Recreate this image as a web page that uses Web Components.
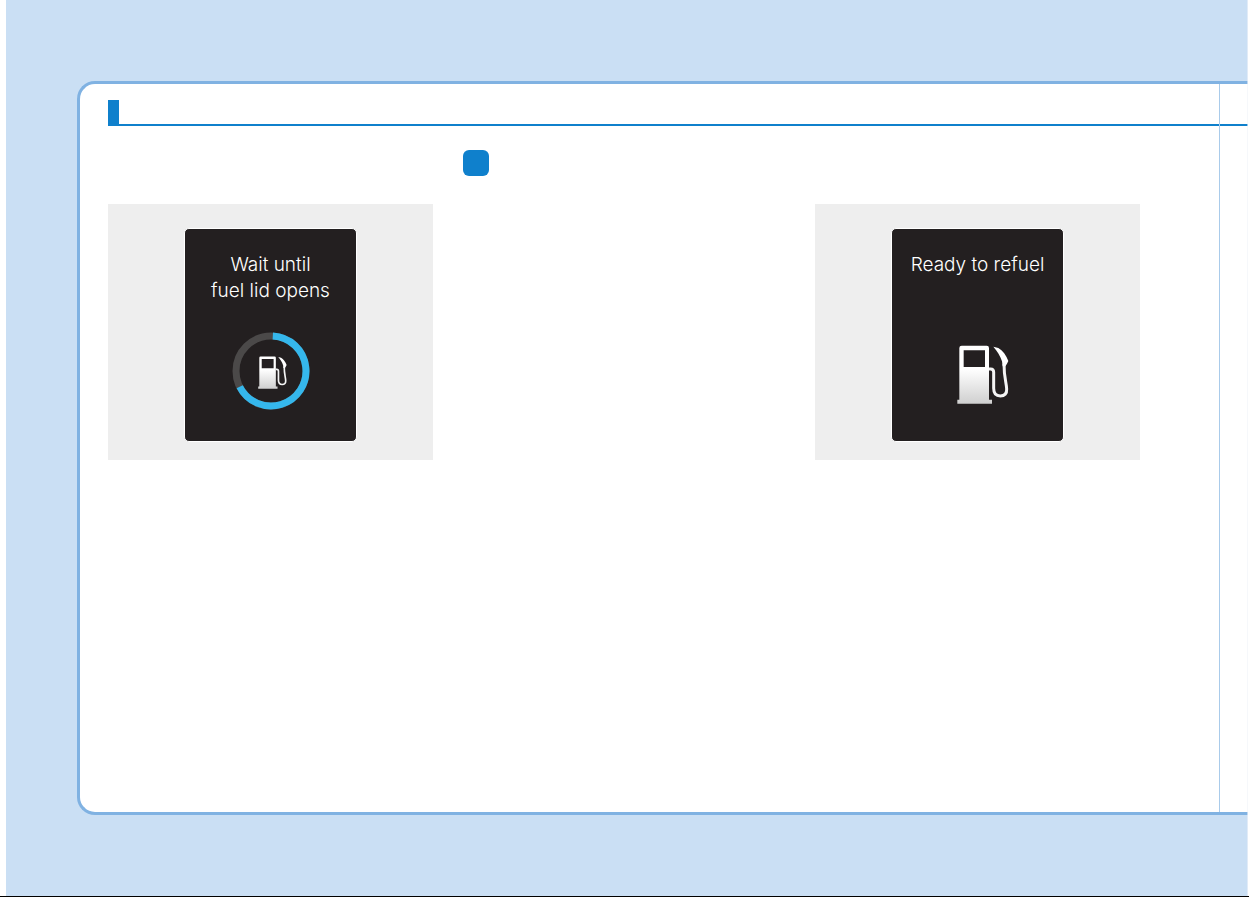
<!DOCTYPE html>
<html lang="en">
<head>
<meta charset="utf-8">
<title>Opening the fuel lid</title>
<style>
  html { background: #fff; }
  body { box-sizing: border-box; display: flex; min-height: 100vh; margin: 0; border-bottom: 1px solid #000;
    font-family: Inter, Roboto, "Liberation Sans", sans-serif; }
</style>
</head>
<body>
<manual-page>
  <section-rule></section-rule>
  <column-grid>
    <manual-figure>
      <cluster-screen>Wait until<br>fuel lid opens
        <progress-ring slot="icon"><fuel-pump size="small"></fuel-pump></progress-ring>
      </cluster-screen>
    </manual-figure>
    <step-badge></step-badge>
    <manual-figure>
      <cluster-screen>Ready to refuel
        <fuel-pump slot="icon"></fuel-pump>
      </cluster-screen>
    </manual-figure>
  </column-grid>
</manual-page>

<script>
const define = (name, html) => customElements.define(name, class extends HTMLElement {
  constructor() {
    super();
    this.attachShadow({ mode: 'open' }).innerHTML = html;
  }
});

define('manual-page', `
  <style>
    :host { flex: 1; display: flex; box-sizing: border-box; margin: 0 1px 0 6px;
      padding: 81px 0; position: relative; background: #cadff4; }
    :host::after { content: ""; position: absolute; top: 0; right: 0; bottom: 0; width: 1px; background: rgba(240,244,249,.6); }
    .frame { flex: 1; display: flex; margin-left: 71px; background: #fff; border: 3px solid #80b2e2;
      border-right: 0; border-radius: 18px 0 0 18px; }
    main { flex: 1; min-width: 0; padding: 16px 0 16px 28px; }
    aside { width: 28px; padding-top: 16px; border-left: 1px solid #a9cbea; }
    .next { height: 24px; border-bottom: 2px solid #0f80cc; }
  </style>
  <div class="frame">
    <main><slot></slot></main>
    <aside><div class="next"></div></aside>
  </div>`);

define('section-rule', `
  <style>
    :host { display: block; border-bottom: 2px solid #0f80cc; }
    .tab { width: 11px; height: 24px; background: #0f80cc; }
  </style>
  <div class="tab"></div>`);

define('column-grid', `
  <style>
    :host { display: grid; grid-template-columns: 325fr 322fr 325fr; gap: 30px; padding: 24px 79px 0 0; align-items: start; }
  </style>
  <slot></slot>`);

define('manual-figure', `
  <style>
    :host { display: block; }
    figure { box-sizing: border-box; margin: 54px 0 0; height: 256px; padding-top: 24px; display: flex;
      justify-content: center; align-items: flex-start; background: #eee; }
  </style>
  <figure><slot></slot></figure>`);

define('step-badge', `
  <style>
    :host { display: block; width: 26px; height: 26px; border-radius: 6px; background: #0f80cc; }
  </style>`);

define('cluster-screen', `
  <style>
    :host { display: flex; flex-direction: column; box-sizing: border-box; width: 173px; height: 214px;
      padding: 23px 0 31px; border: 1px solid #fff; border-radius: 5px; background: #231f20; color: #fff;
      box-shadow: 0 0 1px #fff;
      font-size: 19px; line-height: 26px; font-weight: 300; text-align: center; }
    p { margin: 0; }
    .icon { display: flex; flex: 1; align-items: flex-end; justify-content: center; }
  </style>
  <p><slot></slot></p>
  <div class="icon"><slot name="icon"></slot></div>`);

define('progress-ring', `
  <style>
    :host { display: grid; place-items: center; width: 78px; height: 78px; }
    svg, .inner { grid-area: 1 / 1; }
    .inner { display: flex; padding-left: 3px; padding-top: 2px; }
  </style>
  <svg width="78" height="78" viewBox="-39 -39 78 78" fill="none" stroke-width="7" aria-hidden="true">
    <circle r="35" stroke="#4b4949"/>
    <path d="M1.8 -34.95A35 35 0 1 1 -31.3 15.7" stroke="#35b7ec"/>
  </svg>
  <div class="inner"><slot></slot></div>`);

define('fuel-pump', `
  <style>
    :host { display: block; width: 52px; height: 59px; }
    :host([size="small"]) { width: 29px; height: 33px; }
    :host([slot="icon"]) { padding: 0 0 6px 10px; }
    svg { display: block; width: 100%; height: 100%; }
  </style>
  <svg viewBox="50 42 156 177" aria-hidden="true">
    <defs><linearGradient id="g" x1="0" y1="0" x2="0" y2="1">
      <stop offset=".4" stop-color="#fff"/><stop offset="1" stop-color="#cfcfcf"/>
    </linearGradient></defs>
    <path fill="url(#g)" fill-rule="evenodd" d="M64 44H139Q146 44 146 51V206H155V218H51V206H57V51Q57 44 64 44ZM70 58V108H134V58Z"/>
    <path fill="none" stroke="#f4f4f4" stroke-width="9" d="M146 114H151Q160 114 160 124V172C160 188 168 195 180 195C193 195 200 187 199 174C198 154 191 140 191 98"/>
    <path fill="#fff" d="M159 47L174 51C187 59 198 73 204 90L200 98L195 106H187L185 91C180 75 171 61 159 47Z"/>
  </svg>`);
</script>
</body>
</html>
